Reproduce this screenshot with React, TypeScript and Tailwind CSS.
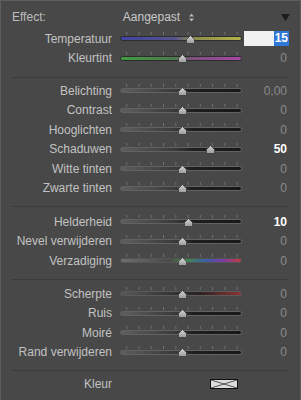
import React from "react";

type Row = {
  label: string;
  pos: number; // thumb centre, px from track left
  track: string;
  value?: string;
  strong?: boolean;
  input?: boolean;
};

const NEUTRAL =
  "border-[#626262] bg-[linear-gradient(to_right,#5e5e5e,#3a3a3a_45%,#1e1e1e_60%,#181818)]";

const sections: { pad: string; rows: Row[] }[] = [
  {
    pad: "pt-[2px] pb-[9px]",
    rows: [
      {
        label: "Temperatuur",
        pos: 70,
        track: "border-[#2e2e2e] bg-[linear-gradient(to_right,#4343a6,#55558a_45%,#8b8b4e_60%,#b3b34a)]",
        input: true,
      },
      {
        label: "Kleurtint",
        pos: 62,
        track: "border-[#2e2e2e] bg-[linear-gradient(to_right,#3f9c3f,#4d7a4d_45%,#7f4f80_60%,#a848a8)]",
        value: "0",
      },
    ],
  },
  {
    pad: "pt-[3px] pb-[8px]",
    rows: [
      { label: "Belichting", pos: 62, track: NEUTRAL, value: "0,00" },
      { label: "Contrast", pos: 62, track: NEUTRAL, value: "0" },
      { label: "Hooglichten", pos: 62, track: NEUTRAL, value: "0" },
      { label: "Schaduwen", pos: 90, track: NEUTRAL, value: "50", strong: true },
      { label: "Witte tinten", pos: 62, track: NEUTRAL, value: "0" },
      { label: "Zwarte tinten", pos: 62, track: NEUTRAL, value: "0" },
    ],
  },
  {
    pad: "pt-[5px] pb-[8px]",
    rows: [
      { label: "Helderheid", pos: 68, track: NEUTRAL, value: "10", strong: true },
      { label: "Nevel verwijderen", pos: 62, track: NEUTRAL, value: "0" },
      {
        label: "Verzadiging",
        pos: 62,
        track:
          "border-[#555] bg-[linear-gradient(to_right,#6e6e6e,#4a4a4a_40%,#3f8a4a_55%,#3a5fa8_70%,#7a3aa6_85%,#c43a3a)]",
        value: "0",
      },
    ],
  },
  {
    pad: "pt-[4.5px] pb-[8px]",
    rows: [
      {
        label: "Scherpte",
        pos: 62,
        track: "border-[#5a5a5a] bg-[linear-gradient(to_right,#585858,#323232_45%,#2a2222_65%,#8e3434)]",
        value: "0",
      },
      { label: "Ruis", pos: 62, track: NEUTRAL, value: "0" },
      { label: "Moiré", pos: 62, track: NEUTRAL, value: "0" },
      { label: "Rand verwijderen", pos: 62, track: NEUTRAL, value: "0" },
    ],
  },
];

const ticks = [6.7, 19, 31.2, 43.5, 55.8, 68.1, 80.3, 92.6, 104.9, 117.2];

function Slider({ pos, track }: { pos: number; track: string }) {
  return (
    <div className="relative w-[122px] h-full flex items-center">
      <svg className="absolute left-0 top-[3px]" width="122" height="3">
        {ticks.map((t) => (
          <line key={t} x1={t} x2={t} y1="0" y2="3" stroke="#707070" strokeWidth="1" />
        ))}
      </svg>
      <div className={`w-full h-[5px] rounded-full border ${track}`} />
      <svg className="absolute top-[5.5px]" style={{ left: pos - 4.5 }} width="9" height="9" viewBox="0 0 9 9">
        <defs>
          <linearGradient id="thumb" x1="0" y1="0" x2="0" y2="1">
            <stop offset="0" stopColor="#d6d6d6" />
            <stop offset="1" stopColor="#9a9a9a" />
          </linearGradient>
        </defs>
        <path d="M4.5 0.5 L8.5 4.5 L8.5 8.5 L0.5 8.5 L0.5 4.5 Z" fill="url(#thumb)" stroke="#3a3a3a" strokeWidth="0.8" />
      </svg>
    </div>
  );
}

function SliderRow({ row }: { row: Row }) {
  return (
    <div className="flex items-center h-[19.5px]">
      <div className="w-[111px] text-right text-[12px] text-[#c2c2c2] whitespace-nowrap">{row.label}</div>
      <div className="w-[8px]" />
      <Slider pos={row.pos} track={row.track} />
      {row.input ? (
        <div className="ml-[2px] w-[45px] h-[15px] bg-[#f2f2f2] flex justify-end items-center">
          <span className="bg-[#2f78d8] text-white font-bold text-[12px] leading-[15px] px-[1px]">15</span>
        </div>
      ) : (
        <div
          className={`w-[45px] text-right text-[12px] ${row.strong ? "text-white font-bold" : "text-[#8a8a8a]"}`}
        >
          {row.value}
        </div>
      )}
    </div>
  );
}

export default function App() {
  return (
    <div
      className="w-[301px] h-[400px] bg-[#484848] border-t border-l border-r border-[#5e5e5e] overflow-hidden"
      style={{ fontFamily: '"Liberation Sans", Arial, sans-serif' }}
    >
      <div className="pt-[6px] px-[11px]">
        <div className="flex items-center h-[20px]">
          <span className="text-[12px] text-[#bdbdbd]">Effect:</span>
          <span className="ml-[77px] text-[12px] text-[#c8c8c8]">Aangepast</span>
          <svg className="ml-[9px]" width="5" height="9" viewBox="0 0 5 9">
            <path d="M2.5 0.5 L5 3.5 L0 3.5 Z" fill="#b5b5b5" />
            <path d="M2.5 8.5 L5 5.5 L0 5.5 Z" fill="#b5b5b5" />
          </svg>
          <svg className="ml-auto mr-[-1px]" width="9" height="7" viewBox="0 0 9 7">
            <path d="M0 0 L9 0 L4.5 7 Z" fill="#1c1c1c" />
          </svg>
        </div>
      </div>

      {sections.map((s, i) => (
        <div key={i}>
          <div className={s.pad}>
            {s.rows.map((r) => (
              <SliderRow key={r.label} row={r} />
            ))}
          </div>
          <div className="mx-[11px] h-[1px] bg-[#3c3c3c]" />
        </div>
      ))}

      <div className="pt-[3.5px] flex items-center h-[23px]">
        <div className="w-[111px] text-right text-[12px] text-[#c2c2c2]">Kleur</div>
        <div className="ml-[98px] w-[28px] h-[10px] border border-[#111] bg-[#dcdcdc]">
          <svg width="26" height="8" viewBox="0 0 26 8" className="block">
            <path d="M0 0 L13 4 L26 0 M0 8 L13 4 L26 8" stroke="#333" strokeWidth="0.8" fill="none" />
          </svg>
        </div>
      </div>
    </div>
  );
}
